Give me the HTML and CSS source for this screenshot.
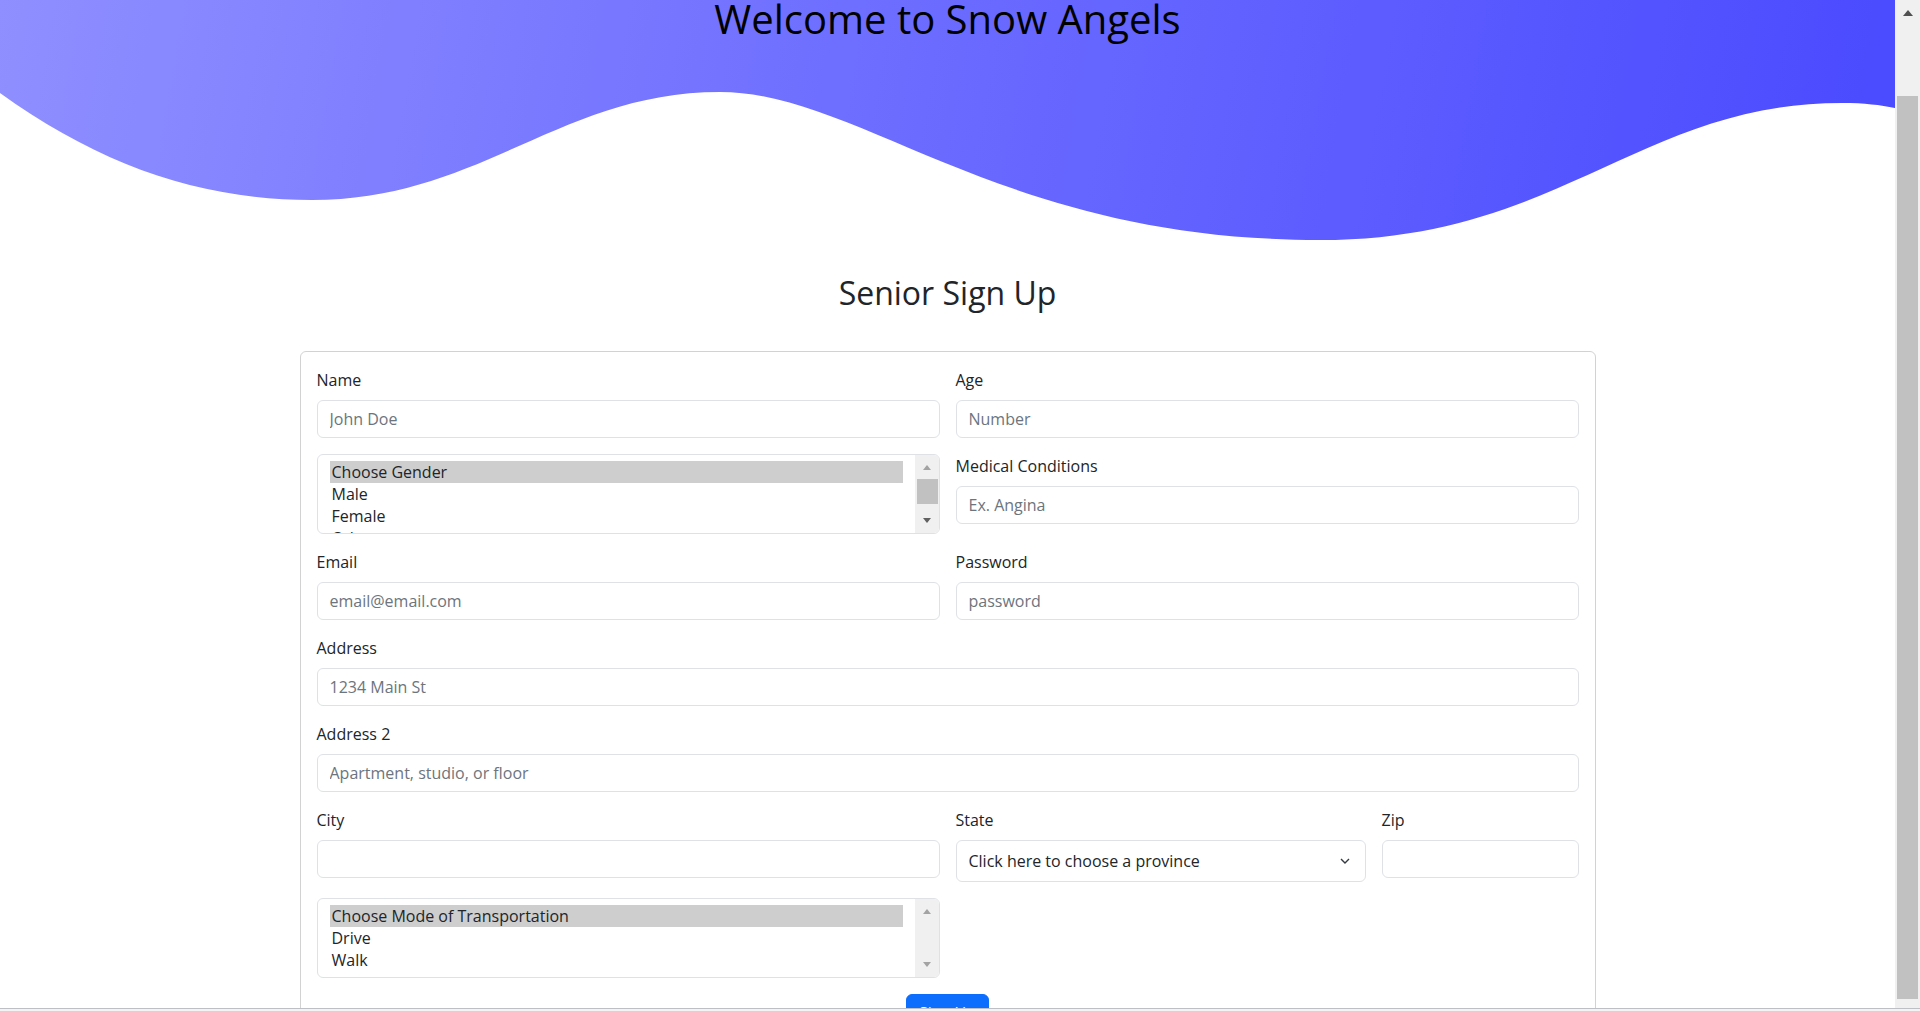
FILE: index.html
```html
<!DOCTYPE html>
<html lang="en">
<head>
<meta charset="UTF-8">
<meta name="viewport" content="width=device-width, initial-scale=1.0">
<title>Snow Angels - Senior Sign Up</title>
<link rel="stylesheet" href="styles.css">
</head>
<body>
<div class="window">
    <div class="window-main">
        <div class="viewport">
            <header class="hero">
                <h1>Welcome to Snow Angels</h1>
            </header>

            <h2 class="page-title">Senior Sign Up</h2>

            <div class="container">
                <form class="card">
                    <div class="form-grid">
                        <div class="col-6">
                            <label class="form-label" for="name">Name</label>
                            <input class="form-control" id="name" type="text" placeholder="John Doe">
                        </div>
                        <div class="col-6">
                            <label class="form-label" for="age">Age</label>
                            <input class="form-control" id="age" type="text" placeholder="Number">
                        </div>

                        <div class="col-6">
                            <!-- gender listbox -->
                            <div class="listbox">
                                <div class="listbox-options">
                                    <div class="option selected">Choose Gender</div>
                                    <div class="option">Male</div>
                                    <div class="option">Female</div>
                                    <div class="option">Other</div>
                                </div>
                                <div class="listbox-scrollbar">
                                    <div class="sb-button"><span class="tri-up"></span></div>
                                    <div class="sb-thumb"></div>
                                    <div class="sb-track"></div>
                                    <div class="sb-button"><span class="tri-down dark"></span></div>
                                </div>
                            </div>
                        </div>
                        <div class="col-6">
                            <label class="form-label" for="medical">Medical Conditions</label>
                            <input class="form-control" id="medical" type="text" placeholder="Ex. Angina">
                        </div>

                        <div class="col-6">
                            <label class="form-label" for="email">Email</label>
                            <input class="form-control" id="email" type="text" placeholder="email@email.com">
                        </div>
                        <div class="col-6">
                            <label class="form-label" for="password">Password</label>
                            <input class="form-control" id="password" type="text" placeholder="password">
                        </div>

                        <div class="col-12">
                            <label class="form-label" for="address">Address</label>
                            <input class="form-control" id="address" type="text" placeholder="1234 Main St">
                        </div>

                        <div class="col-12">
                            <label class="form-label" for="address2">Address 2</label>
                            <input class="form-control" id="address2" type="text" placeholder="Apartment, studio, or floor">
                        </div>

                        <div class="col-6">
                            <label class="form-label" for="city">City</label>
                            <input class="form-control" id="city" type="text">
                        </div>
                        <div class="col-4">
                            <label class="form-label">State</label>
                            <div class="form-select">
                                <span>Click here to choose a province</span>
                                <svg width="10" height="6" viewBox="0 0 10 6"><polyline points="1,1 5,5 9,1" fill="none" stroke="#343a40" stroke-width="1.4"/></svg>
                            </div>
                        </div>
                        <div class="col-2">
                            <label class="form-label" for="zip">Zip</label>
                            <input class="form-control" id="zip" type="text">
                        </div>

                        <div class="col-6">
                            <!-- transport listbox -->
                            <div class="listbox">
                                <div class="listbox-options">
                                    <div class="option selected">Choose Mode of Transportation</div>
                                    <div class="option">Drive</div>
                                    <div class="option">Walk</div>
                                </div>
                                <div class="listbox-scrollbar">
                                    <div class="sb-button"><span class="tri-up"></span></div>
                                    <div class="sb-track"></div>
                                    <div class="sb-button"><span class="tri-down"></span></div>
                                </div>
                            </div>
                        </div>
                    </div>

                    <div class="form-actions">
                        <button type="button" class="btn-primary">Sign Up</button>
                    </div>
                </form>
            </div>
        </div>

        <div class="page-scrollbar">
            <div class="arrow-btn"><span class="tri-up page"></span></div>
            <div class="page-thumb"></div>
        </div>
    </div>
    <div class="window-edge"></div>
</div>
</body>
</html>
```

FILE: styles.css
```css
* {
    box-sizing: border-box;
}

html, body {
    margin: 0;
    height: 100%;
}

body {
    font-family: "Open Sans", "Noto Sans", sans-serif;
    font-size: 16px;
    line-height: 1.5;
    color: #212529;
    background: #fff;
    overflow: hidden;
}

/* window frame */
.window {
    display: flex;
    flex-direction: column;
    height: 1011px;
}

.window-main {
    display: flex;
    height: 1008px;
}

.viewport {
    flex: 1;
    overflow: hidden;
    background: #fff;
}

.window-edge {
    height: 3px;
    border-top: 1px solid #bcc0c6;
    background: #f3f3f3;
}

.page-scrollbar {
    width: 25px;
    background: #f0f0f0;
    display: flex;
    flex-direction: column;
    align-items: center;
}

.arrow-btn {
    height: 26px;
    display: flex;
    align-items: center;
    justify-content: center;
}

.page-thumb {
    width: 21px;
    height: 903px;
    margin-top: 70px;
    background: #c1c1c1;
}

/* triangles */
.tri-up, .tri-down {
    width: 0;
    height: 0;
    border-left: 4.5px solid transparent;
    border-right: 4.5px solid transparent;
}

.tri-up {
    border-bottom: 5px solid #a3a3a3;
}

.tri-down {
    border-top: 5px solid #a3a3a3;
}

.tri-down.dark {
    border-top-color: #606060;
}

.tri-up.page {
    border-left-width: 5.5px;
    border-right-width: 5.5px;
    border-bottom: 6px solid #505050;
}

/* header wave */
.hero {
    height: 245px;
    background: linear-gradient(100deg, #8f8fff 0%, #6a6aff 50%, #4a4aff 100%);
    clip-path: path("M0,0 H1895 V108 C1880,105 1865,103 1842,103 C1640,103 1560,240 1320,240 C1000,240 860,92 720,92 C560,92 480,200 312,200 C200,200 100,165 0,93 Z");
    text-align: center;
}

.hero h1 {
    margin: 0;
    font-size: 40px;
    line-height: 38px;
    font-weight: 400;
    color: #000;
}

.page-title {
    margin: 29px 0 0;
    font-size: 32px;
    line-height: 38px;
    font-weight: 400;
    text-align: center;
}

/* form */
.container {
    max-width: 1320px;
    margin: 39px auto 0;
    padding: 0 12px;
}

.card {
    border: 1px solid rgba(0, 0, 0, 0.175);
    border-radius: 6px;
    padding: 16px;
}

.form-grid {
    display: grid;
    grid-template-columns: repeat(12, minmax(0, 1fr));
    gap: 16px;
    align-items: start;
}

.col-2 { grid-column: span 2; }
.col-4 { grid-column: span 4; }
.col-6 { grid-column: span 6; }
.col-12 { grid-column: span 12; }

.form-label {
    display: block;
    margin-bottom: 8px;
}

.form-control {
    display: block;
    width: 100%;
    height: 38px;
    padding: 6px 12px;
    font: inherit;
    color: #212529;
    background: #fff;
    border: 1px solid #dee2e6;
    border-radius: 6px;
    outline: none;
}

.form-control::placeholder {
    color: #6c757d;
}

.form-select {
    display: flex;
    align-items: center;
    justify-content: space-between;
    height: 42px;
    padding: 0 15px 0 12px;
    border: 1px solid #dee2e6;
    border-radius: 6px;
    background: #fff;
}

.form-select svg {
    display: block;
}

.listbox {
    display: flex;
    height: 80px;
    border: 1px solid #dee2e6;
    border-radius: 6px;
    overflow: hidden;
}

.listbox-options {
    flex: 1;
    padding: 6px 12px;
    overflow: hidden;
}

.option {
    height: 22px;
    line-height: 22px;
    padding: 0 2px;
    white-space: nowrap;
    color: #212529;
}

.option.selected {
    background: #cecece;
}

.listbox-scrollbar {
    width: 24px;
    background: #f0f0f0;
    display: flex;
    flex-direction: column;
}

.sb-button {
    height: 25px;
    display: flex;
    align-items: center;
    justify-content: center;
}

.sb-thumb {
    height: 25px;
    margin: -1px 1px 0 2px;
    background: #c1c1c1;
}

.sb-track {
    flex: 1;
}

.form-actions {
    margin-top: 16px;
    text-align: center;
}

.btn-primary {
    font: inherit;
    color: #fff;
    background: #0d6efd;
    border: 1px solid #0d6efd;
    border-radius: 6px;
    padding: 6px 12px;
    cursor: pointer;
}
```
